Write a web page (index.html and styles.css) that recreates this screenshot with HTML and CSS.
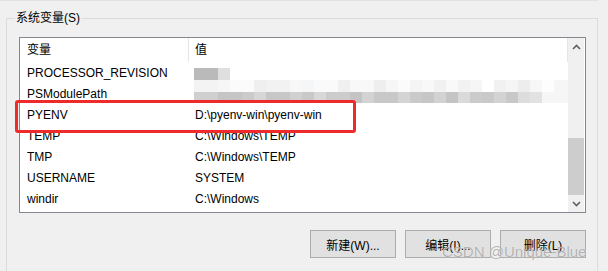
FILE: index.html
```html
<!DOCTYPE html>
<html lang="zh-CN">
<head>
    <meta charset="UTF-8">
    <title>系统变量</title>
    <link rel="stylesheet" href="styles.css">
</head>
<body>
    <div class="topline"></div>
    <div class="group">
        <div class="group-title">系统变量(S)</div>
        <div class="list">
            <div class="list-body">
                <div class="list-head">
                    <div class="col-name">变量</div>
                    <div class="col-value">值</div>
                </div>
                <div class="row"><div class="name">PROCESSOR_REVISION</div><div class="value"></div></div>
                <div class="row"><div class="name">PSModulePath</div><div class="value"></div></div>
                <div class="row"><div class="name">PYENV</div><div class="value">D:\pyenv-win\pyenv-win</div></div>
                <div class="row"><div class="name">TEMP</div><div class="value">C:\Windows\TEMP</div></div>
                <div class="row"><div class="name">TMP</div><div class="value">C:\Windows\TEMP</div></div>
                <div class="row"><div class="name">USERNAME</div><div class="value">SYSTEM</div></div>
                <div class="row"><div class="name">windir</div><div class="value">C:\Windows</div></div>
                <!-- pixelated values -->
                <div class="mosaic">
                    <div class="m1"></div>
                    <div class="m2"></div>
                    <div class="m3"></div>
                </div>
            </div>
            <div class="scrollbar">
                <div class="arrow">
                    <svg width="9" height="6" viewBox="0 0 9 6"><polyline points="1,5 4.5,1.5 8,5" fill="none" stroke="#606060" stroke-width="1.6"/></svg>
                </div>
                <div class="track"><div class="thumb"></div></div>
                <div class="arrow">
                    <svg width="9" height="6" viewBox="0 0 9 6"><polyline points="1,1 4.5,4.5 8,1" fill="none" stroke="#606060" stroke-width="1.6"/></svg>
                </div>
            </div>
        </div>
        <div class="highlight"></div>
        <div class="actions">
            <button>新建(W)...</button>
            <button>编辑(I)...</button>
            <button>删除(L)</button>
        </div>
    </div>
    <div class="watermark">CSDN @Unique-Blue</div>
</body>
</html>
```

FILE: styles.css
```css
body {
    margin: 0;
    background: #f0f0f0;
    font-family: 'Liberation Sans', 'Noto Sans CJK SC', sans-serif;
    font-size: 12px;
    color: #000;
    height: 271px;
    overflow: hidden;
    position: relative;
}
.topline {
    height: 1px;
    width: 598px;
    background: #e2e2e2;
}
.group {
    position: relative;
    margin: 17px 10px 0 6px;
    border: 1px solid #dcdcdc;
    border-bottom: none;
    height: 235px;
    padding: 18px 11px 0 12px;
}
.group-title {
    position: absolute;
    top: -9px;
    left: 8px;
    padding: 0 1px;
    line-height: 16px;
    background: #f0f0f0;
}
.list {
    display: flex;
    height: 174px;
    border: 1px solid #828790;
    background: #fff;
}
.list-body {
    flex: 1;
    position: relative;
    overflow: hidden;
}
.list-head {
    display: flex;
    height: 24px;
    line-height: 24px;
}
.col-name {
    width: 161px;
    padding-left: 7px;
    border-right: 1px solid #e5e5e5;
}
.col-value {
    flex: 1;
    padding-left: 6px;
    border-right: 1px solid #e5e5e5;
}
.row {
    display: flex;
    height: 21px;
    line-height: 22px;
    white-space: nowrap;
}
.name {
    width: 162px;
    padding-left: 7px;
}
.value {
    padding-left: 6px;
}
.mosaic {
    position: absolute;
    left: 174px;
    top: 30px;
}
.m1 {
    width: 36px;
    height: 12px;
    background: linear-gradient(to right, #bababa 0 24px, #dfdfdf 24px 36px);
}
.m2 {
    width: 376px;
    height: 12px;
    background: linear-gradient(to right,
        #f3f3f3 0 24px, #f6f6f6 24px 36px, #fbfbfb 36px 60px, #efefef 60px 72px,
        #f2f2f2 72px 96px, #f7f7f7 96px 108px, #f4f6f8 108px 120px, #fafafa 120px 144px,
        #f0f0f0 144px 156px, #f8f8f8 156px 180px, #eeeeee 180px 192px, #f6f6f6 192px 204px,
        #fbfbfb 204px 216px, #f4f4f4 216px 228px, #f8f8f8 228px 240px, #f1f1f1 240px 252px,
        #f9f9f9 252px 264px, #f2f2f2 264px 276px, #f6f6f6 276px 288px, #ffffff 288px 300px,
        #f1f1f1 300px 312px, #f5f5f5 312px 324px, #ededed 324px 336px, #f7f7f7 336px 348px,
        #fdfdfd 348px 360px, #f6f6f6 360px 376px);
}
.m3 {
    width: 374px;
    height: 11px;
    background: linear-gradient(to right,
        #cfcfcf 0 24px, #c5c5c5 24px 48px, #cbcbcb 48px 60px, #d6d6d6 60px 72px,
        #c7c7c7 72px 96px, #d0d0d0 96px 108px, #c9c9c9 108px 120px, #d8d8d8 120px 132px,
        #cccccc 132px 156px, #c4c4c4 156px 168px, #d3d3d3 168px 180px, #c8c8c8 180px 204px,
        #d4d4d4 204px 216px, #cacaca 216px 228px, #c6c6c6 228px 240px, #d2d2d2 240px 252px,
        #c4c4c4 252px 264px, #dadada 264px 276px, #cbcbcb 276px 288px, #c9c9c9 288px 300px,
        #d3d3d3 300px 312px, #c8c8c8 312px 324px, #dddddd 324px 336px, #e2e2e2 336px 348px,
        #f6f6f6 348px 374px);
}
.scrollbar {
    width: 16px;
    margin-right: 1px;
    background: #f0f0f0;
    display: flex;
    flex-direction: column;
}
.arrow {
    height: 17px;
    display: flex;
    align-items: center;
    justify-content: center;
}
.track {
    flex: 1;
    display: flex;
    flex-direction: column;
    justify-content: flex-end;
}
.thumb {
    height: 57px;
    background: #cdcdcd;
}
.highlight {
    position: absolute;
    left: 8px;
    top: 81px;
    width: 341px;
    height: 33px;
    box-sizing: border-box;
    border: 3px solid #ef2a2a;
    border-radius: 3px;
}
.actions {
    display: flex;
    justify-content: flex-end;
    gap: 9px;
    margin-top: 17px;
}
.actions button {
    width: 86px;
    height: 28px;
    border: 1px solid #adadad;
    background: #e1e1e1;
    font-family: 'Liberation Sans', 'Noto Sans CJK SC', sans-serif;
    font-size: 12px;
    color: #000;
    padding: 0;
}
.watermark {
    position: absolute;
    left: 442px;
    top: 243px;
    font-size: 15px;
    color: rgba(150, 150, 150, 0.7);
    text-shadow: 0 0 1px rgba(255, 255, 255, 0.8);
    white-space: nowrap;
}
```
